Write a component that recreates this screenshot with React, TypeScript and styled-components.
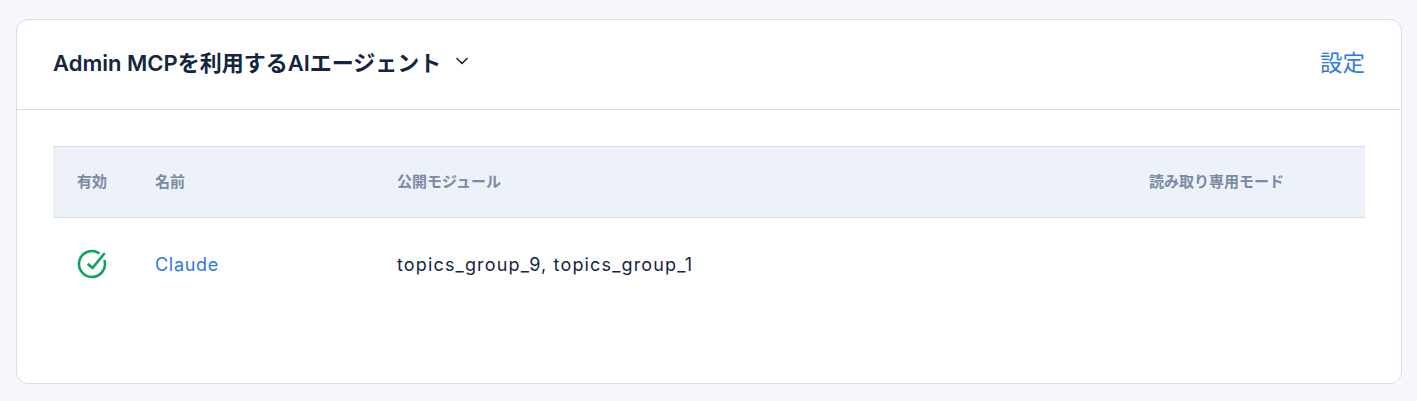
import React from 'react'
import styled, { createGlobalStyle } from 'styled-components'

const GlobalStyle = createGlobalStyle`
  html, body {
    margin: 0;
    background: #f7f8fb;
    font-family: Inter, "Noto Sans CJK JP", sans-serif;
    color: #14263f;
  }
`

const Page = styled.div`
  padding: 19px 15px 17px 16px;
`

const Card = styled.section`
  background: #fff;
  border: 1px solid #d5deeb;
  border-radius: 12px;
  height: 365px;
  box-sizing: border-box;
`

const Header = styled.header`
  display: flex;
  align-items: center;
  justify-content: space-between;
  height: 90px;
  box-sizing: border-box;
  padding: 0 36px 8px;
  border-bottom: 1px solid #d5deeb;
`

const TitleButton = styled.div`
  display: flex;
  align-items: center;
  gap: 14px;
`

const Title = styled.h2`
  margin: 0;
  font-size: 22px;
  font-weight: 600;
  color: #14263f;
`

const SettingsLink = styled.a`
  font-size: 22.5px;
  color: #2f7ae5;
  cursor: pointer;
`

const Body = styled.div`
  padding: 36px 36px 0;
`

const Table = styled.table`
  width: 100%;
  border-collapse: collapse;
  table-layout: fixed;
`

const HeadRow = styled.tr`
  height: 71px;
  background: #edf1f8;
  border-top: 1px solid #d5deeb;
  border-bottom: 1px solid #d5deeb;
`

const HeadCell = styled.th<{ $width?: number }>`
  width: ${({ $width }) => ($width ? `${$width}px` : 'auto')};
  box-sizing: border-box;
  padding: 0 0 4px 24px;
  text-align: left;
  font-size: 15px;
  font-weight: 700;
  color: #7a8aa5;
`

const Cell = styled.td`
  height: 92px;
  padding: 0 0 0 24px;
  vertical-align: middle;
`

const NameLink = styled.a`
  font-size: 18px;
  letter-spacing: 0.7px;
  color: #2f7ae5;
  cursor: pointer;
`

const ModuleList = styled.span`
  font-size: 18px;
  letter-spacing: 1.15px;
  color: #14263f;
`

const StatusIcon = styled.svg`
  display: block;
  width: 30px;
  height: 30px;
  fill: none;
  stroke: #0ba360;
  stroke-width: 2.6;
  stroke-linecap: round;
  stroke-linejoin: round;
`

const Chevron = styled.svg`
  display: block;
  width: 14px;
  height: 14px;
  fill: none;
  stroke: #14263f;
  stroke-width: 1.6;
  stroke-linecap: round;
  stroke-linejoin: round;
`

export default function App() {
  return (
    <>
      <GlobalStyle />
      <Page>
        <Card>
          <Header>
            <TitleButton>
              <Title>Admin MCPを利用するAIエージェント</Title>
              <Chevron viewBox="0 0 14 14">
                <path d="M2 4.5 7 9.5 12 4.5" />
              </Chevron>
            </TitleButton>
            <SettingsLink>設定</SettingsLink>
          </Header>
          <Body>
            <Table>
              <thead>
                <HeadRow>
                  <HeadCell $width={78}>有効</HeadCell>
                  <HeadCell $width={242}>名前</HeadCell>
                  <HeadCell $width={752}>公開モジュール</HeadCell>
                  <HeadCell>読み取り専用モード</HeadCell>
                </HeadRow>
              </thead>
              <tbody>
                <tr>
                  <Cell>
                    <StatusIcon viewBox="0 0 30 30">
                      <path d="M27.6 12A13 13 0 1 1 21.5 3.8" />
                      <path d="M11.5 15.5 15.5 19 27 5" />
                    </StatusIcon>
                  </Cell>
                  <Cell>
                    <NameLink>Claude</NameLink>
                  </Cell>
                  <Cell>
                    <ModuleList>topics_group_9, topics_group_1</ModuleList>
                  </Cell>
                  <Cell />
                </tr>
              </tbody>
            </Table>
          </Body>
        </Card>
      </Page>
    </>
  )
}
